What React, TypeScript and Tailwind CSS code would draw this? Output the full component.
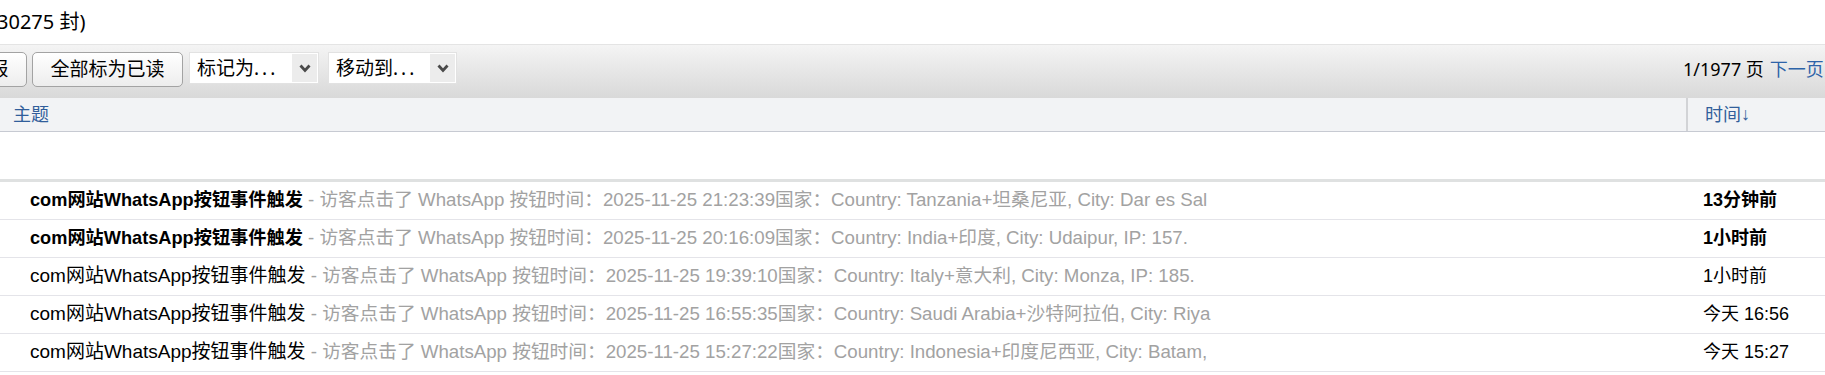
import React from 'react';

interface MailRow {
  unread: boolean;
  subject: string;
  digest: string;
  time: string;
}

const rows: MailRow[] = [
  {
    unread: true,
    subject: 'com网站WhatsApp按钮事件触发',
    digest: '访客点击了 WhatsApp 按钮时间：2025-11-25 21:23:39国家：Country: Tanzania+坦桑尼亚, City: Dar es Sal',
    time: '13分钟前',
  },
  {
    unread: true,
    subject: 'com网站WhatsApp按钮事件触发',
    digest: '访客点击了 WhatsApp 按钮时间：2025-11-25 20:16:09国家：Country: India+印度, City: Udaipur, IP: 157.',
    time: '1小时前',
  },
  {
    unread: false,
    subject: 'com网站WhatsApp按钮事件触发',
    digest: '访客点击了 WhatsApp 按钮时间：2025-11-25 19:39:10国家：Country: Italy+意大利, City: Monza, IP: 185.',
    time: '1小时前',
  },
  {
    unread: false,
    subject: 'com网站WhatsApp按钮事件触发',
    digest: '访客点击了 WhatsApp 按钮时间：2025-11-25 16:55:35国家：Country: Saudi Arabia+沙特阿拉伯, City: Riya',
    time: '今天 16:56',
  },
  {
    unread: false,
    subject: 'com网站WhatsApp按钮事件触发',
    digest: '访客点击了 WhatsApp 按钮时间：2025-11-25 15:27:22国家：Country: Indonesia+印度尼西亚, City: Batam,',
    time: '今天 15:27',
  },
];

const Chevron: React.FC = () => (
  <svg width="12" height="9" viewBox="0 0 12 9" fill="none">
    <polyline points="1.5,1.5 6,6.5 10.5,1.5" stroke="#4a4a4a" strokeWidth="2.8" strokeLinejoin="miter" />
  </svg>
);

const FakeSelect: React.FC<{ label: string; className?: string }> = ({ label, className }) => (
  <div
    className={`flex h-[32px] items-center justify-between border border-[#e2e2e2] bg-white pl-[7px] pr-[1px] ${className ?? ''}`}
  >
    <span className="text-[19px] leading-none text-black">
      {label}
      <span className="tracking-[3px]">...</span>
    </span>
    <span className="flex h-[28px] w-[25px] items-center justify-center bg-[#ececec]">
      <Chevron />
    </span>
  </div>
);

export default function App() {
  const uiFont = { fontFamily: '"Noto Sans", "Noto Sans CJK SC", sans-serif' };
  const listFont = { fontFamily: '"Liberation Sans", "Noto Sans CJK SC", sans-serif' };

  return (
    <div className="h-[375px] w-[1825px] overflow-hidden bg-white">
      <div className="w-[1900px]" style={uiFont}>
        {/* title */}
        <div className="flex h-[44px] items-center">
          <span className="-ml-[3px] text-[20px] text-black">30275 封)</span>
        </div>

        {/* toolbar */}
        <div className="flex h-[54px] items-start border-t border-[#e4e4e4] bg-gradient-to-b from-[#f4f4f4] to-[#d9d9d9] pt-[7px]">
          <button className="-ml-[48px] h-[35px] w-[75px] rounded-[5px] border border-[#a3a3a3] bg-gradient-to-b from-white to-[#ededed] text-[19px] text-black">
            举报
          </button>
          <button className="ml-[5px] h-[35px] w-[151px] rounded-[5px] border border-[#a3a3a3] bg-gradient-to-b from-white to-[#ededed] text-[19px] text-black">
            全部标为已读
          </button>
          <FakeSelect label="标记为" className="ml-[6px] w-[130px]" />
          <FakeSelect label="移动到" className="ml-[9px] w-[129px]" />
          <div className="ml-auto flex h-[35px] w-[217px] items-center gap-[6px] text-[18px]">
            <span className="text-black">1/1977 页</span>
            <span className="text-[#2d63a8]">下一页</span>
            <span className="text-[#2d63a8]">尾页</span>
          </div>
        </div>

        {/* header */}
        <div className="flex h-[34px] border-b border-[#c7cad2] bg-[#f2f3f5] text-[18px] text-[#315e9b]">
          <div className="flex flex-1 items-center pl-[13px]">主题</div>
          <div className="flex w-[214px] items-center border-l-2 border-[#d2d3d6] pl-[17px]">
            <span>时间</span>
            <span style={{ fontFamily: '"Liberation Sans", sans-serif' }}>↓</span>
          </div>
        </div>

        <div className="h-[47px]" />

        {/* list */}
        <div className="border-t-[3px] border-[#dfe1e1]" style={listFont}>
          {rows.map((r, i) => (
            <div key={i} className="flex h-[38px] items-center border-b border-[#e4e4e9] text-[18.7px]">
              <div className="flex-1 whitespace-nowrap pl-[30px]">
                <span className={r.unread ? 'text-[18.2px] font-bold text-black' : 'text-[19px] text-black'}>
                  {r.subject}
                </span>
                <span className="text-[#a2a2a2]"> - {r.digest}</span>
              </div>
              <div className={`w-[214px] pl-[17px] text-[18px] text-black ${r.unread ? 'font-bold' : ''}`}>{r.time}</div>
            </div>
          ))}
        </div>
      </div>
    </div>
  );
}
